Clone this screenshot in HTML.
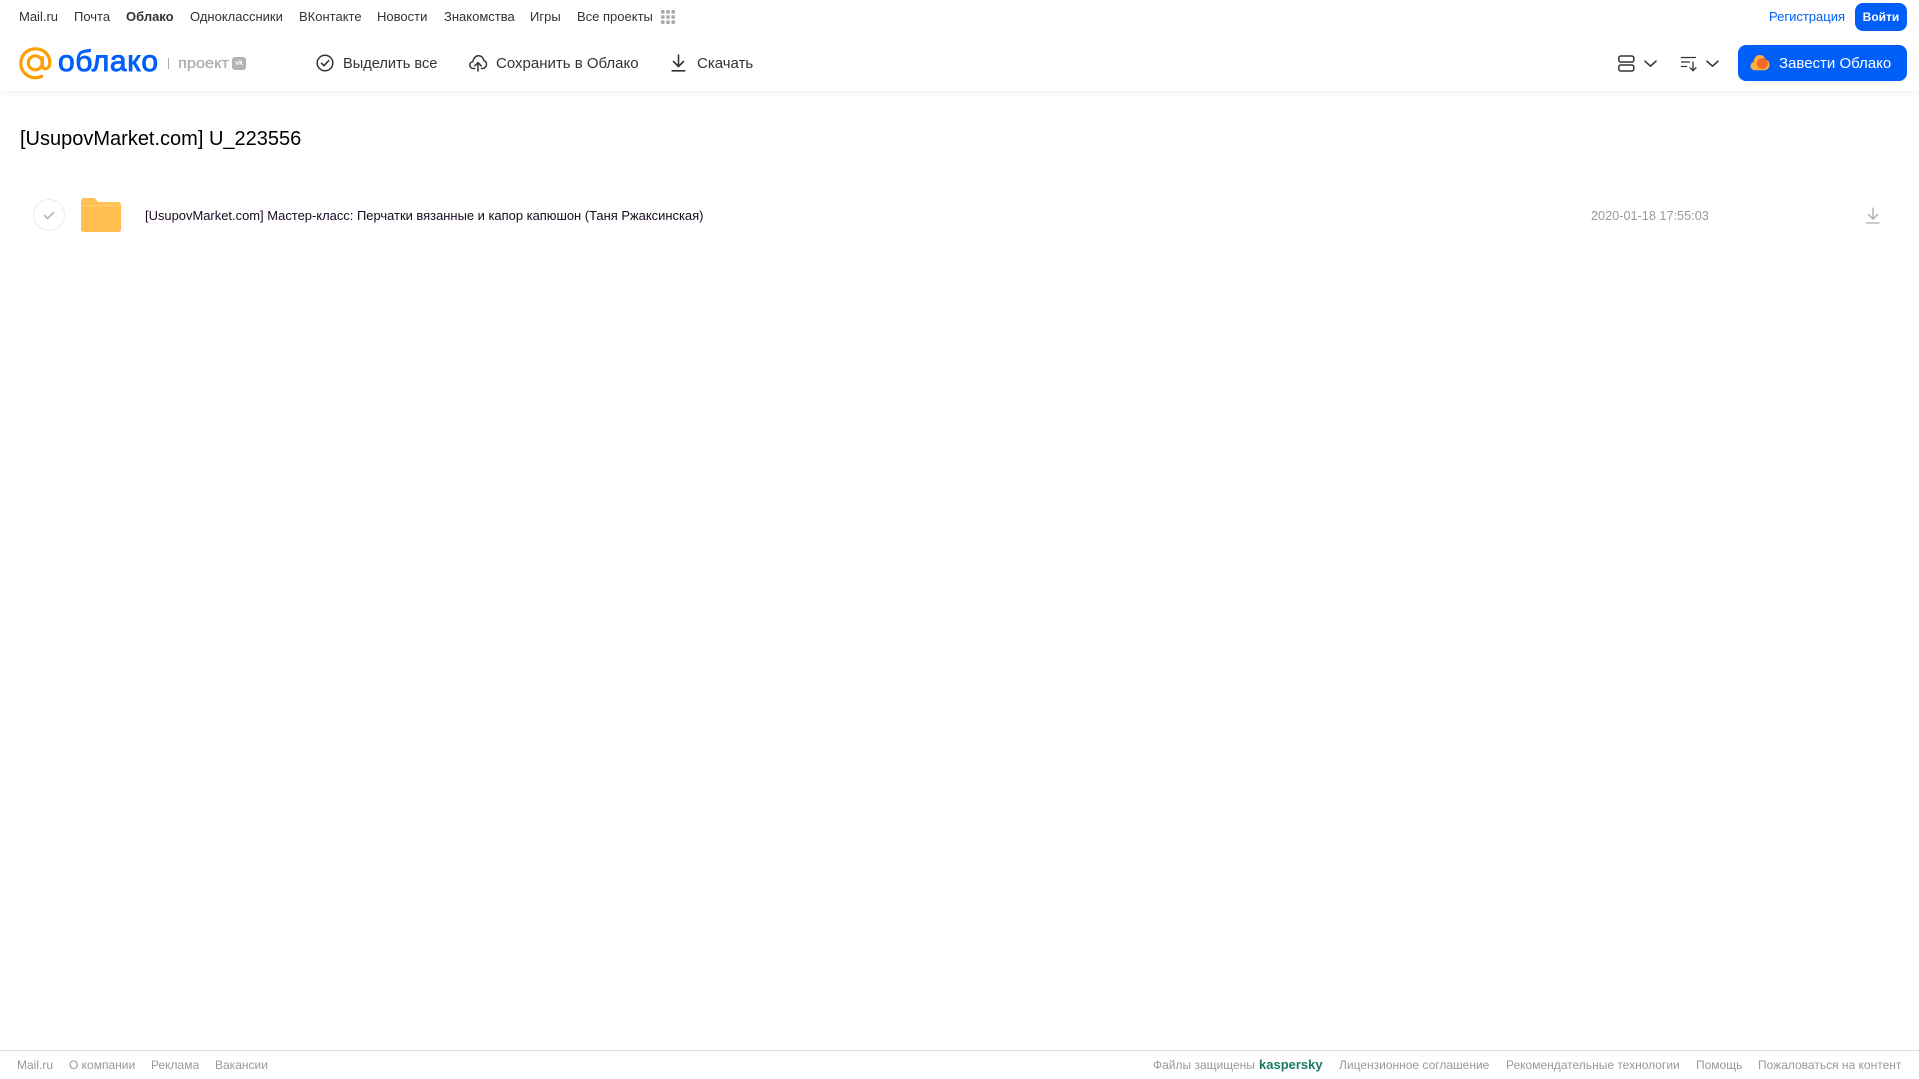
<!DOCTYPE html>
<html lang="ru"><head><meta charset="utf-8"><title>Облако</title>
<style>
html,body{margin:0;padding:0;background:#fff;width:1919px;height:1079px;overflow:hidden;font-family:"Liberation Sans",sans-serif}
.t{position:absolute;white-space:nowrap;line-height:16px}
.n{top:9px;font-size:13px;color:#333}
.b{top:56px;font-size:15px;color:#333}
.f{top:1057px;font-size:12px;color:#999}
svg{position:absolute;overflow:visible}
#hd{position:absolute;left:0;top:0;width:1919px;height:91px;background:#fff;box-shadow:0 1px 6px rgba(0,0,0,.08)}
.btn{position:absolute;background:#005ff9;border-radius:8px}
</style></head><body>
<div id="hd"></div>
<span class="t n" style="left:19px">Mail.ru</span>
<span class="t n" style="left:74px">Почта</span>
<span class="t n" style="left:126px;font-weight:700">Облако</span>
<span class="t n" style="left:190px">Одноклассники</span>
<span class="t n" style="left:299px">ВКонтакте</span>
<span class="t n" style="left:377px">Новости</span>
<span class="t n" style="left:444px">Знакомства</span>
<span class="t n" style="left:530px">Игры</span>
<span class="t n" style="left:577px">Все проекты</span>
<svg style="left:661px;top:10px" width="15" height="14" fill="#aaa"><rect x="0" y="0" width="3.6" height="3.6" rx="1"/><rect x="5.2" y="0" width="3.6" height="3.6" rx="1"/><rect x="10.4" y="0" width="3.6" height="3.6" rx="1"/><rect x="0" y="5.2" width="3.6" height="3.6" rx="1"/><rect x="5.2" y="5.2" width="3.6" height="3.6" rx="1"/><rect x="10.4" y="5.2" width="3.6" height="3.6" rx="1"/><rect x="0" y="10.4" width="3.6" height="3.6" rx="1"/><rect x="5.2" y="10.4" width="3.6" height="3.6" rx="1"/><rect x="10.4" y="10.4" width="3.6" height="3.6" rx="1"/></svg>

<svg style="left:19px;top:47px" width="33" height="33" fill="none" stroke="#ff9e00" stroke-width="3.2"><circle cx="16.3" cy="15.8" r="7"/><path d="M23.3 9.5v8.600c0 5.400 7.500 5 7.500-2.600C30.800 7.500 24.500 1.800 16.300 1.800 8.200 1.800 1.800 8.300 1.800 16.300s6.400 14.500 14.500 14.500c3 0 5.500-.8 7.500-2.200"/></svg>
<svg style="left:57px;top:44px" width="104" height="36"><text x="1" y="27" font-family="Liberation Sans,sans-serif" font-size="30" fill="#005ff9" stroke="#005ff9" stroke-width=".9" textLength="100" lengthAdjust="spacing">облако</text></svg>
<div style="position:absolute;left:168px;top:58px;width:1px;height:11px;background:#aaa"></div>
<svg style="left:178px;top:55px" width="54" height="18"><text x="0" y="13" font-family="Liberation Sans,sans-serif" font-size="15" fill="#aeaeae" stroke="#aeaeae" stroke-width=".3" textLength="51" lengthAdjust="spacingAndGlyphs">проект</text></svg>
<div style="position:absolute;left:232px;top:57px;width:14px;height:13px;border-radius:3px;background:#b3b3b3;color:#fff;font-size:7px;font-weight:700;line-height:13px;text-align:center">vk</div>

<svg style="left:316px;top:54px" width="18" height="18" fill="none" stroke="#333" stroke-width="1.500"><circle cx="9" cy="9" r="7.800"/><path d="M5.500 9.200l2.500 2.500 4.700-5" stroke-linecap="round" stroke-linejoin="round"/></svg>
<span class="t b" style="left:343px;font-size:14.600px">Выделить все</span>
<svg style="left:469px;top:54px" width="18" height="18" fill="none" stroke="#333" stroke-width="1.500" stroke-linecap="round" stroke-linejoin="round"><path d="M5.500 14.500H4.200C2.200 14.500.800 13 .800 11.100c0-1.800 1.300-3.200 3-3.400C4.300 4.300 6.500 1.800 9.500 1.800c2.800 0 5 2.100 5.400 4.800 1.600.5 2.600 2 2.600 3.700 0 2.300-1.700 4.200-4 4.200h-1"/><path d="M9 17V9M5.800 11.800L9 8.600l3.200 3.200"/></svg>
<span class="t b" style="left:496px">Сохранить в Облако</span>
<svg style="left:671px;top:54px" width="15" height="18" fill="none" stroke="#333" stroke-width="1.600" stroke-linecap="round" stroke-linejoin="round"><path d="M7.500 1v11M2.500 7.500l5 5 5-5"/><path d="M1.200 16.800h12.600"/></svg>
<span class="t b" style="left:697px">Скачать</span>

<svg style="left:1618px;top:55px" width="17" height="17" fill="none" stroke="#333" stroke-width="1.500"><rect x=".8" y="1" width="15" height="6" rx="2"/><rect x=".8" y="10" width="15" height="6" rx="2"/></svg>
<svg style="left:1644px;top:60px" width="13" height="8" fill="none" stroke="#333" stroke-width="1.600" stroke-linecap="round" stroke-linejoin="round"><path d="M1 1.200l5.500 5 5.500-5"/></svg>
<svg style="left:1681px;top:55px" width="17" height="17" fill="none" stroke="#333" stroke-width="1.300" stroke-linecap="round" stroke-linejoin="round"><path d="M.5 2.500h14M.5 7h8M.5 11.500h5M12 7v8.500M9 12.700l3 3 3-3"/></svg>
<svg style="left:1706px;top:60px" width="13" height="8" fill="none" stroke="#333" stroke-width="1.600" stroke-linecap="round" stroke-linejoin="round"><path d="M1 1.200l5.500 5 5.500-5"/></svg>

<span class="t" style="left:1769px;top:9px;font-size:13px;color:#005ff9">Регистрация</span>
<div class="btn" style="left:1855px;top:3px;width:52px;height:28px;color:#fff;font-size:12px;font-weight:700;line-height:28px;text-align:center">Войти</div>
<div class="btn" style="left:1738px;top:45px;width:169px;height:36px"></div>
<svg style="left:1750px;top:54px" width="20" height="18"><path d="M5 16.200C2.300 16.200.500 14.300.500 12c0-2 1.300-3.600 3.100-4C4.100 4 6.400 1 9.700 1c2.800 0 5 1.900 5.800 4.600 2.400.3 4 2.500 4 5.100 0 3-2.300 5.500-5.300 5.500z" fill="#ffb03a"/><circle cx="12.300" cy="9.500" r="5.500" fill="#f5682a"/></svg>
<span class="t" style="left:1779px;top:56px;font-size:15px;color:#fff">Завести Облако</span>

<span class="t" style="left:20px;top:127px;font-size:20px;line-height:24px;color:#000">[UsupovMarket.com] U_223556</span>

<svg style="left:32px;top:198px" width="34" height="34" fill="none"><circle cx="17" cy="17" r="15.500" stroke="#ececec" stroke-width="1"/><path d="M12.500 17.500l3.200 3 5.800-6" stroke="#aaa" stroke-width="1.400" stroke-linecap="round" stroke-linejoin="round"/></svg>
<svg style="left:81px;top:198px" width="40" height="34"><path d="M0 3C0 1.300 1.300 0 3 0h9c1.500 0 2.500.6 3.300 1.600L17 4h20c1.700 0 3 1.300 3 3v24c0 1.700-1.300 3-3 3H3c-1.700 0-3-1.300-3-3z" fill="#ffc153"/><path d="M0 8.500h40V31c0 1.700-1.300 3-3 3H3c-1.700 0-3-1.300-3-3z" fill="#ffbe4f"/><path d="M0 7h40v1.500H0z" fill="#ffcb6b"/></svg>
<span class="t" style="left:145px;top:208px;font-size:12.950px;color:#1a0a20">[UsupovMarket.com] Мастер-класс: Перчатки вязанные и капор капюшон (Таня Ржаксинская)</span>
<span class="t" style="left:1591px;top:208px;font-size:12.700px;color:#999">2020-01-18 17:55:03</span>
<svg style="left:1866px;top:207px" width="14" height="18" fill="none" stroke="#aaa" stroke-width="1.300" stroke-linecap="round" stroke-linejoin="round"><path d="M7 1v11M2.500 7.500L7 12l4.500-4.500"/><path d="M.8 16h12.400"/></svg>

<div style="position:absolute;left:0;top:1050px;width:1919px;height:1px;background:#ddd"></div>
<span class="t f" style="left:17px">Mail.ru</span>
<span class="t f" style="left:69px">О компании</span>
<span class="t f" style="left:151px">Реклама</span>
<span class="t f" style="left:215px">Вакансии</span>
<span class="t f" style="left:1153px">Файлы защищены</span>
<span class="t f" style="left:1259px;font-size:13px;font-weight:700;color:#1b7a65">kaspersky</span>
<span class="t f" style="left:1339px">Лицензионное соглашение</span>
<span class="t f" style="left:1506px">Рекомендательные технологии</span>
<span class="t f" style="left:1696px">Помощь</span>
<span class="t f" style="left:1758px">Пожаловаться на контент</span>
</body></html>
